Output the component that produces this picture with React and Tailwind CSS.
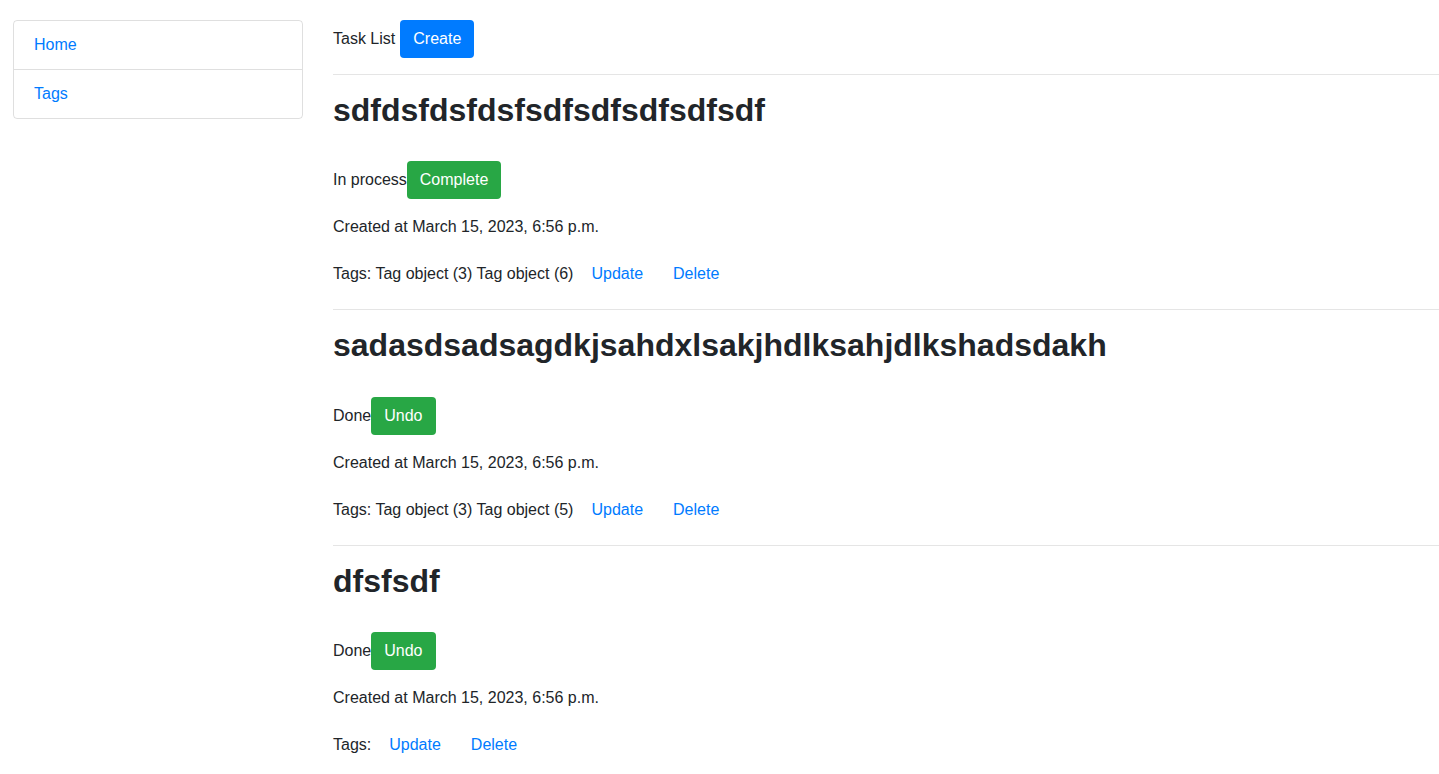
const tasks = [
  {
    id: 1,
    title: 'sdfdsfdsfdsfsdfsdfsdfsdfsdf',
    status: 'In process',
    action: 'Complete',
    created: 'March 15, 2023, 6:56 p.m.',
    tags: ['Tag object (3)', 'Tag object (6)'],
  },
  {
    id: 2,
    title: 'sadasdsadsagdkjsahdxlsakjhdlksahjdlkshadsdakh',
    status: 'Done',
    action: 'Undo',
    created: 'March 15, 2023, 6:56 p.m.',
    tags: ['Tag object (3)', 'Tag object (5)'],
  },
  {
    id: 3,
    title: 'dfsfsdf',
    status: 'Done',
    action: 'Undo',
    created: 'March 15, 2023, 6:56 p.m.',
    tags: [],
  },
];

function Hr() {
  return <hr className="my-4 border-0 border-t border-[rgba(0,0,0,0.1)]" />;
}

function TaskItem({ task }) {
  return (
    <div>
      <Hr />
      <h1 className="mb-8 text-[32px] font-bold leading-[1.2] text-[#212529]">{task.title}</h1>
      <div className="mb-4 flex h-[38px] items-center">
        <span>{task.status}</span>
        <button className="h-[38px] rounded-[4px] bg-[#28a745] px-[13px] text-white">{task.action}</button>
      </div>
      <p className="mb-4 leading-6">Created at {task.created}</p>
      <div className="flex h-[38px] items-center">
        <span>Tags: {task.tags.join(' ')}</span>
        <a href="#" className="ml-[6px] px-3 text-[#007bff]">
          Update
        </a>
        <a href="#" className="ml-[6px] px-3 text-[#007bff]">
          Delete
        </a>
      </div>
    </div>
  );
}

export default function App() {
  return (
    <div
      className="flex min-h-screen bg-white pl-[13px] pt-5 text-base text-[#212529]"
      style={{ fontFamily: '"Liberation Sans", Arial, sans-serif' }}
    >
      <nav className="w-[290px] shrink-0 self-start">
        <ul className="rounded-[4px] border border-[rgba(0,0,0,0.125)]">
          <li className="border-b border-[rgba(0,0,0,0.125)] px-5 py-3 leading-6">
            <a href="#" className="text-[#007bff]">
              Home
            </a>
          </li>
          <li className="px-5 py-3 leading-6">
            <a href="#" className="text-[#007bff]">
              Tags
            </a>
          </li>
        </ul>
      </nav>

      <main className="ml-[30px] flex-1">
        <div className="flex h-[38px] items-center">
          <span className="mr-[5px]">Task List</span>
          <button className="h-[38px] rounded-[4px] bg-[#007bff] px-[13px] text-white">Create</button>
        </div>
        {tasks.map((task) => (
          <TaskItem key={task.id} task={task} />
        ))}
      </main>
    </div>
  );
}
